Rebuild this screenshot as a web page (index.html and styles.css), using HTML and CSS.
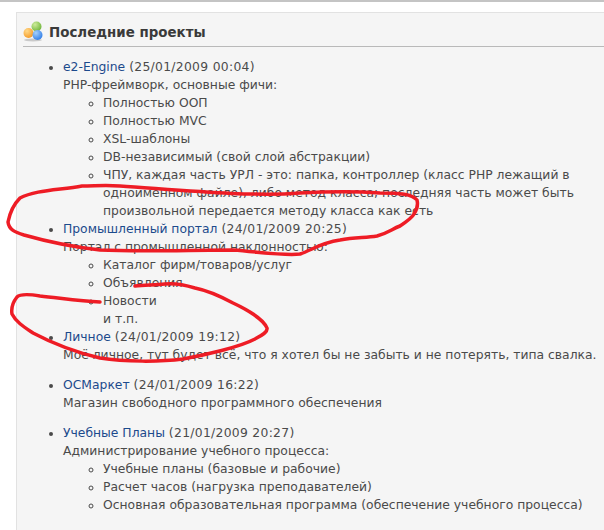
FILE: index.html
```html
<!DOCTYPE html>
<html lang="ru">
<head>
<meta charset="utf-8">
<title>Последние проекты</title>
<link rel="stylesheet" href="styles.css">
</head>
<body>
<div class="page">
  <section class="panel">
    <h2 class="title">
      <svg class="logo" width="21" height="21" viewBox="0 0 21 21">
        <defs>
          <radialGradient id="g" cx="35%" cy="30%" r="75%"><stop offset="0" stop-color="#cdeb9a"/><stop offset="1" stop-color="#6fb53a"/></radialGradient>
          <radialGradient id="o" cx="35%" cy="30%" r="75%"><stop offset="0" stop-color="#ffd98a"/><stop offset="1" stop-color="#f59a25"/></radialGradient>
          <radialGradient id="b" cx="35%" cy="30%" r="75%"><stop offset="0" stop-color="#a5d0fb"/><stop offset="1" stop-color="#2f7de8"/></radialGradient>
        </defs>
        <ellipse cx="10" cy="19" rx="9" ry="1.4" fill="#c9c9c9"/>
        <circle cx="13.5" cy="5.5" r="5" fill="url(#g)"/>
        <circle cx="5.5" cy="12" r="5" fill="url(#o)"/>
        <circle cx="14.5" cy="14" r="5" fill="url(#b)"/>
      </svg>
      <span>Последние проекты</span>
    </h2>
    <ul class="projects">
      <li>
        <a href="#">e2-Engine</a> <span class="date">(25/01/2009 00:04)</span><br>PHP-фреймворк, основные фичи:
        <ul>
          <li>Полностью ООП</li>
          <li>Полностью MVC</li>
          <li>XSL-шаблоны</li>
          <li>DB-независимый (свой слой абстракции)</li>
          <li>ЧПУ, каждая часть УРЛ - это: папка, контроллер (класс PHP лежащий в одноименном файле), либо метод класса; последняя часть может быть произвольной передается методу класса как есть</li>
        </ul>
      </li>
      <li>
        <a href="#">Промышленный портал</a> <span class="date">(24/01/2009 20:25)</span><br>Портал с промышленной наклонностью:
        <ul>
          <li>Каталог фирм/товаров/услуг</li>
          <li>Объявления</li>
          <li>Новости</li>
          <li class="plain">и т.п.</li>
        </ul>
      </li>
      <li class="spaced">
        <a href="#">Личное</a> <span class="date">(24/01/2009 19:12)</span><br>Моё личное, тут будет всё, что я хотел бы не забыть и не потерять, типа свалка.
      </li>
      <li class="spaced">
        <a href="#">ОСМаркет</a> <span class="date">(24/01/2009 16:22)</span><br>Магазин свободного программного обеспечения
      </li>
      <li>
        <a href="#">Учебные Планы</a> <span class="date">(21/01/2009 20:27)</span><br>Администрирование учебного процесса:
        <ul>
          <li>Учебные планы (базовые и рабочие)</li>
          <li>Расчет часов (нагрузка преподавателей)</li>
          <li>Основная образовательная программа (обеспечение учебного процесса)</li>
        </ul>
      </li>
    </ul>
  </section>
  <svg class="ink" width="604" height="530" viewBox="0 0 604 530">
    <path d="M300 193 C250 197 180 190 120 186 C105 185 95 186 82 186 C60 190 35 190 20 198 C14 204 10 212 8 222 C9 230 15 232 24 235 C45 241 65 246 100 250 C140 252 190 250 233 250 C260 252 285 256 300 254 C312 250 320 243 340 240 C355 237 365 238 377 236 C388 233 392 229 400 226 C406 222 412 218 414 214 C418 208 418 204 417 200 C412 194 400 193 380 193 C350 191 320 192 300 193 Z"/>
    <path d="M100 302 C80 301 60 298 40 296 C28 294 20 294 17 297 C13 302 11 308 12 314 C16 322 24 327 33 333 C50 342 70 351 100 358 C125 362 160 362 183 359 C205 355 240 347 255 339 C262 335 268 332 267 328 C264 320 248 310 233 303 C220 296 205 290 195 288 C185 285 175 283 165 284 C155 285 145 285 135 286"/>
  </svg>
</div>
</body>
</html>
```
FILE: styles.css
```css
html, body {
  margin: 0;
  padding: 0;
  background: #fff;
}
.page {
  position: relative;
  width: 604px;
  height: 530px;
  overflow: hidden;
  border-top: 2px solid #c4c4c4;
  box-sizing: border-box;
  padding: 10px 0 0 16px;
  font-family: "DejaVu Sans", Verdana, sans-serif;
  font-size: 12.35px;
  line-height: 18px;
  color: #4a4a4a;
}
.panel {
  box-sizing: border-box;
  width: 600px;
  min-height: 530px;
  background: #f5f5f5;
  border: 1px solid #e2e2e2;
  padding: 6px 6px 0;
}
.title {
  display: flex;
  align-items: center;
  gap: 5px;
  margin: 0;
  height: 27px;
  border-bottom: 1px solid #b9b9b9;
  font-size: 13.4px;
  line-height: 22px;
  font-weight: bold;
  color: #3a3a3a;
}
.logo {
  flex: none;
  margin-bottom: 2px;
}
.projects,
.projects ul {
  margin: 0;
  padding: 0 0 0 40px;
}
.projects {
  margin-top: 11px;
  list-style: disc;
}
.projects ul {
  list-style: circle;
}
.spaced {
  margin-bottom: 12px;
}
.plain {
  list-style: none;
}
.date {
  letter-spacing: 0.3px;
}
a {
  color: #1c4a8c;
  text-decoration: none;
}
.ink {
  position: absolute;
  left: 0;
  top: 0;
  margin-top: -2px;
  pointer-events: none;
}
.ink path {
  fill: none;
  stroke: #ee1c25;
  stroke-width: 3.5;
  stroke-linecap: round;
  stroke-linejoin: round;
}
```
